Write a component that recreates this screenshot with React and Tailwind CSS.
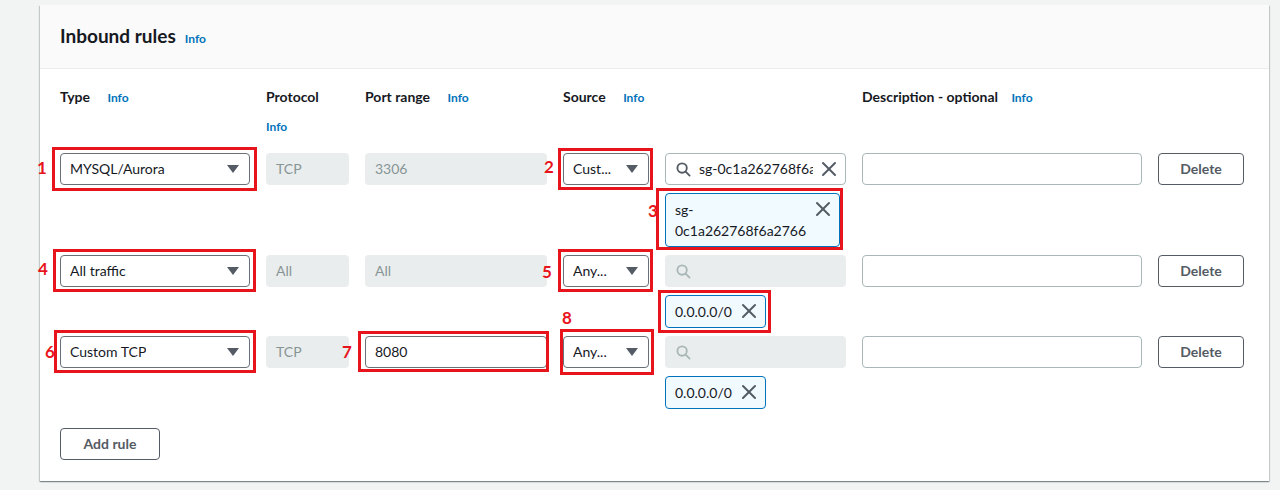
import { useState } from 'react'

const FONT = { fontFamily: 'Lato, "Noto Sans", sans-serif' }

function Info({ className = '' }) {
  return <span className={`text-xs font-bold text-[#0073bb] ${className}`}>Info</span>
}

function Caret() {
  return (
    <svg width="12" height="8" viewBox="0 0 12 8" className="shrink-0">
      <polygon points="0,0 12,0 6,8" fill="#545b64" />
    </svg>
  )
}

function SearchIcon({ color }) {
  return (
    <svg width="15" height="15" viewBox="0 0 16 16" fill="none" stroke={color} strokeWidth="2" strokeLinecap="round" className="shrink-0">
      <circle cx="6.5" cy="6.5" r="5" />
      <line x1="10.5" y1="10.5" x2="14.5" y2="14.5" />
    </svg>
  )
}

function XIcon() {
  return (
    <svg width="16" height="16" viewBox="0 0 16 16" fill="none" stroke="#545b64" strokeWidth="2" strokeLinecap="round" className="shrink-0">
      <line x1="2" y1="2" x2="14" y2="14" />
      <line x1="14" y1="2" x2="2" y2="14" />
    </svg>
  )
}

// red annotation frame laid over a control
function Mark({ n, frame, num, children, className = '' }) {
  return (
    <div className={`relative ${className}`}>
      {children}
      <div className={`pointer-events-none absolute border-[3px] border-[#e8141b] ${frame}`} />
      {n && <span className={`absolute text-[17px] font-bold leading-none text-[#e8141b] ${num}`}>{n}</span>}
    </div>
  )
}

function Select({ value }) {
  return (
    <div className="flex h-8 items-center justify-between rounded-sm border border-[#687078] bg-white pl-[9px] pr-[10px] text-sm text-[#16191f]">
      <span className="truncate">{value}</span>
      <Caret />
    </div>
  )
}

function Disabled({ value }) {
  return (
    <div className="flex h-8 items-center rounded-sm bg-[#eaeded] px-[10px] text-sm text-[#879596]">{value}</div>
  )
}

function TextInput({ value = '' }) {
  return (
    <div className="flex h-8 items-center rounded-sm border border-[#aab7b8] bg-white px-[9px] text-sm text-[#16191f]">{value}</div>
  )
}

function SearchBox({ value }) {
  if (!value) {
    return (
      <div className="flex h-8 items-center rounded-sm bg-[#eaeded] px-[11px]">
        <SearchIcon color="#aab7b8" />
      </div>
    )
  }
  return (
    <div className="flex h-8 items-center gap-2 rounded-sm border border-[#aab7b8] bg-white pl-[10px] pr-2 text-sm text-[#16191f]">
      <SearchIcon color="#545b64" />
      <span className="min-w-0 flex-1 overflow-hidden whitespace-nowrap">{value}</span>
      <XIcon />
    </div>
  )
}

function Token({ children, className = '' }) {
  return (
    <div className={`flex items-start justify-between gap-2 rounded-sm border border-[#0073bb] bg-[#f1faff] py-[5px] pl-[9px] pr-2 text-sm leading-[21px] text-[#16191f] ${className}`}>
      <span>{children}</span>
      <span className="pt-[2px]"><XIcon /></span>
    </div>
  )
}

function Button({ children, className = '' }) {
  return (
    <button className={`flex h-8 items-center justify-center rounded-sm border border-[#545b64] bg-white text-sm font-bold text-[#545b64] ${className}`}>
      {children}
    </button>
  )
}

const cols = 'grid grid-cols-[190px_83px_182px_86px_181px_280px_86px] gap-x-4 items-start'

export default function App() {
  const [rules] = useState([
    { type: 'MYSQL/Aurora', proto: 'TCP', port: '3306', source: 'Cust...', search: 'sg-0c1a262768f6a2766' },
    { type: 'All traffic', proto: 'All', port: 'All', source: 'Any...' },
    { type: 'Custom TCP', proto: 'TCP', port: '8080', source: 'Any...' },
  ])

  return (
    <div className="min-h-screen bg-[#f2f3f3] pb-[9px] pl-10 pr-[11px] pt-[5px]" style={FONT}>
      <div className="bg-white shadow-[0_1px_1px_0_rgba(0,28,36,0.3),1px_1px_1px_0_rgba(0,28,36,0.15),-1px_1px_1px_0_rgba(0,28,36,0.15)]">
        <div className="flex h-[64px] items-center border-b border-[#eaeded] bg-[#fafafa] px-5">
          <h2 className="text-[19px] font-bold text-[#16191f]">Inbound rules</h2>
          <Info className="ml-[9px] mt-1" />
        </div>

        <div className="px-5 pb-[21px] pt-[18px]">
          <div className={`${cols} text-sm font-bold leading-5 text-[#16191f]`}>
            <div>Type <Info className="ml-[14px]" /></div>
            <div>
              <div>Protocol</div>
              <Info className="mt-3 block" />
            </div>
            <div>Port range <Info className="ml-[14px]" /></div>
            <div className="col-span-2">Source <Info className="ml-[14px]" /></div>
            <div>Description - optional <Info className="ml-[10px]" /></div>
            <div />
          </div>

          <div className="mt-[18px] flex flex-col gap-2">
            {/* row 1 */}
            <div className={cols}>
              <Mark n="1" frame="-left-2 -right-[7px] -top-[6px] -bottom-[6px]" num="-left-[23px] top-[6px]">
                <Select value={rules[0].type} />
              </Mark>
              <Disabled value={rules[0].proto} />
              <Disabled value={rules[0].port} />
              <Mark n="2" frame="-left-[5px] -right-1 -top-[5px] -bottom-[5px]" num="-left-[19px] top-[5px]">
                <Select value={rules[0].source} />
              </Mark>
              <div className="flex flex-col gap-2">
                <SearchBox value={rules[0].search} />
                <Mark n="3" frame="-left-[9px] -right-[3px] -top-[5px] -bottom-[3px]" num="-left-[17px] top-[9px]" className="w-[175px]">
                  <Token>
                    sg-<br />0c1a262768f6a2766
                  </Token>
                </Mark>
              </div>
              <TextInput />
              <Button>Delete</Button>
            </div>

            {/* row 2 */}
            <div className={cols}>
              <Mark n="4" frame="-left-[7px] -right-[6px] -top-[6px] -bottom-[5px]" num="-left-[22px] top-[5px]">
                <Select value={rules[1].type} />
              </Mark>
              <Disabled value={rules[1].proto} />
              <Disabled value={rules[1].port} />
              <Mark n="5" frame="-left-[5px] -right-1 -top-[6px] -bottom-[5px]" num="-left-[21px] top-[8px]">
                <Select value={rules[1].source} />
              </Mark>
              <div className="flex flex-col gap-2">
                <SearchBox />
                <Mark frame="-left-[7px] -right-[5px] -top-[5px] -bottom-[5px]" className="w-[101px]">
                  <Token className="items-center leading-5">0.0.0.0/0</Token>
                </Mark>
              </div>
              <TextInput />
              <Button>Delete</Button>
            </div>

            {/* row 3 */}
            <div className={cols}>
              <Mark n="6" frame="-left-[6px] -right-[6px] -top-[6px] -bottom-[5px]" num="-left-[15px] top-[7px]">
                <Select value={rules[2].type} />
              </Mark>
              <Disabled value={rules[2].proto} />
              <Mark n="7" frame="-left-[7px] -right-[2px] -top-[5px] -bottom-[4px]" num="-left-[23px] top-[7px]">
                <div className="flex h-8 items-center rounded-sm border border-[#687078] bg-white px-[9px] text-sm text-[#16191f]">{rules[2].port}</div>
              </Mark>
              <Mark n="8" frame="-left-[3px] -right-[5px] -top-[7px] -bottom-[7px]" num="-left-px -top-[27px]">
                <Select value={rules[2].source} />
              </Mark>
              <div className="flex flex-col gap-2">
                <SearchBox />
                <Token className="w-[101px] items-center leading-5">0.0.0.0/0</Token>
              </div>
              <TextInput />
              <Button>Delete</Button>
            </div>
          </div>

          <Button className="mt-[19px] w-[100px]">Add rule</Button>
        </div>
      </div>
    </div>
  )
}
